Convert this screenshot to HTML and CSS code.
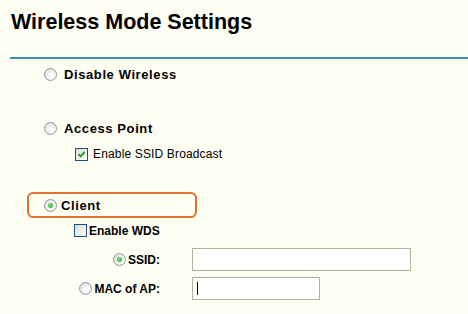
FILE: index.html
```html
<!DOCTYPE html>
<html>
<head>
<meta charset="utf-8">
<link rel="stylesheet" href="styles.css">
</head>
<body>
<h1 class="title">Wireless Mode Settings</h1>
<div class="rule"></div>
<div class="form">
  <div class="row row-main">
    <span class="radio"></span>
    <span class="lbl-main">Disable Wireless</span>
  </div>
  <div class="row row-main row-ap">
    <span class="radio"></span>
    <span class="lbl-main">Access Point</span>
  </div>
  <div class="row row-sub">
    <span class="check checked">
      <svg width="11" height="11" viewBox="0 0 11 11"><path d="M2.5 5.2 L4.6 7.4 L8.6 3" fill="none" stroke="#21a121" stroke-width="2"/></svg>
    </span>
    <span class="lbl-sub">Enable SSID Broadcast</span>
  </div>
  <div class="client-box">
    <span class="radio on"></span>
    <span class="lbl-main">Client</span>
  </div>
  <div class="row row-wds">
    <span class="check"></span>
    <span class="lbl-bold">Enable WDS</span>
  </div>
  <div class="field-row">
    <div class="field-label">
      <span class="radio on"></span>
      <span class="lbl-bold">SSID:</span>
    </div>
    <div class="field field-wide"></div>
  </div>
  <div class="field-row">
    <div class="field-label">
      <span class="radio"></span>
      <span class="lbl-bold">MAC of AP:</span>
    </div>
    <div class="field field-narrow"><span class="caret"></span></div>
  </div>
</div>
</body>
</html>
```
FILE: styles.css
```css
html, body {
  margin: 0;
  padding: 0;
  background: #fefef3;
  font-family: "Liberation Sans", Arial, sans-serif;
  color: #000;
}
.title {
  margin: 0;
  padding: 10px 0 0 11px;
  font-size: 21.5px;
  line-height: 24px;
  font-weight: bold;
}
.rule {
  margin: 23px 0 0 10px;
  height: 2px;
  background: #3592a8;
}
.form {
  display: flex;
  flex-direction: column;
}
.row {
  display: flex;
  align-items: center;
}
.row-main {
  height: 30px;
  padding-left: 44px;
  gap: 7px;
}
.row-ap {
  margin-top: 24px;
}
.row-sub {
  height: 22px;
  padding-left: 75px;
  gap: 5px;
}
.lbl-main {
  font-size: 13px;
  font-weight: bold;
  letter-spacing: 0.6px;
}
.lbl-sub {
  font-size: 12px;
  letter-spacing: 0.15px;
}
.lbl-bold {
  font-size: 12px;
  font-weight: bold;
}
.radio {
  width: 11px;
  height: 11px;
  border: 1px solid #8e99a6;
  border-radius: 50%;
  background: radial-gradient(circle at 65% 65%, #ffffff 0%, #f2f2ee 40%, #d6d6d0 100%);
  flex: none;
  display: flex;
  align-items: center;
  justify-content: center;
}
.radio.on::after {
  content: "";
  width: 5px;
  height: 5px;
  border-radius: 50%;
  background: radial-gradient(circle at 40% 40%, #7fe07f, #21a121);
}
.check {
  width: 11px;
  height: 11px;
  border: 1px solid #1c5180;
  background: linear-gradient(135deg, #dcdcd6, #ffffff);
  flex: none;
  display: flex;
  align-items: center;
  justify-content: center;
}
.check svg {
  display: block;
}
.client-box {
  margin: 27px 0 0 27px;
  height: 22px;
  border: 2px solid #e8702f;
  border-radius: 6px;
  display: flex;
  align-items: center;
  padding-left: 15px;
  gap: 4px;
  box-sizing: content-box;
  width: 151px;
}
.row-wds {
  height: 25px;
  padding-left: 74px;
  gap: 2px;
}
.field-row {
  display: flex;
  align-items: center;
  margin-top: 5px;
}
.field-row + .field-row {
  margin-top: 6px;
}
.field-label {
  width: 192px;
  box-sizing: border-box;
  padding-right: 32px;
  display: flex;
  align-items: center;
  justify-content: flex-end;
  gap: 2px;
}
.field {
  height: 21px;
  border: 1px solid #b4b19c;
  background: #fff;
  display: flex;
  align-items: center;
  padding-left: 4px;
  box-sizing: content-box;
}
.field-wide {
  width: 213px;
}
.field-narrow {
  width: 122px;
}
.caret {
  width: 1px;
  height: 13px;
  background: #000;
}
```
